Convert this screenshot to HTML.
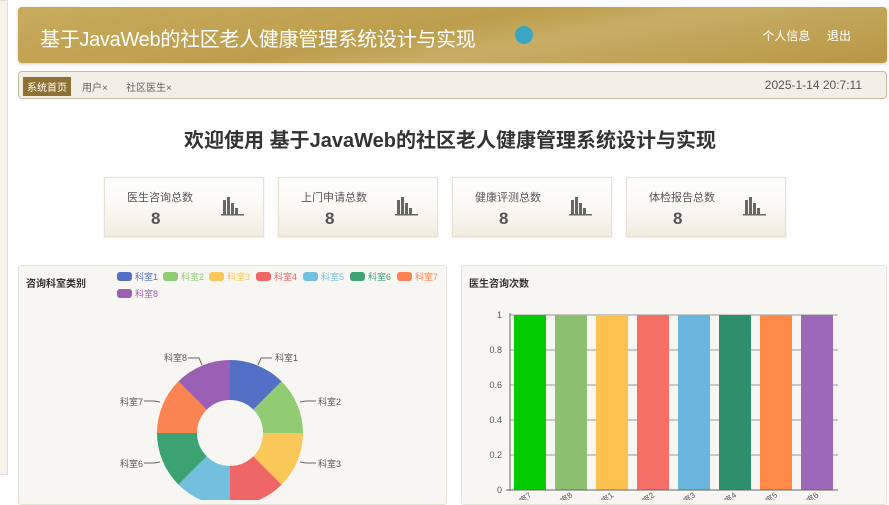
<!DOCTYPE html>
<html><head><meta charset="utf-8"><style>
*{margin:0;padding:0;box-sizing:border-box}
body{width:889px;height:500px;overflow:hidden;background:#fff;font-family:"Liberation Sans","Noto Sans CJK SC",sans-serif;position:relative}
.side{position:absolute;left:0;top:0;width:8px;height:475px;border:1px solid #ddd;border-left:none;background:#f7f3ea}
.hdr{position:absolute;left:18px;top:7px;width:869px;height:56px;border-radius:4px;background:linear-gradient(170deg,#c9ab5e 0%,#bd9e4c 45%,#c8ad65 60%,#b89744 100%);box-shadow:0 1px 3px rgba(0,0,0,.2)}
.hdr .t{position:absolute;left:22px;top:16px;color:#fff;font-size:20px;letter-spacing:-0.3px}
.hdr .r{position:absolute;right:36px;top:20px;color:#fff;font-size:12px;word-spacing:0}
.dot{position:absolute;left:497px;top:19px;width:18px;height:18px;border-radius:50%;background:#3aa6c3}
.tabs{position:absolute;left:18px;top:71px;width:869px;height:28px;border:1px solid #c9bc9c;border-radius:4px;background:#f4efe6}
.tabs span{position:absolute;top:7px;font-size:10px;color:#666}
.tabs .a{left:4px;top:5px;background:#8d7233;color:#fff;padding:2px 4px}
h1{position:absolute;top:124px;left:0;width:900px;text-align:center;font-size:20px;color:#333;font-weight:bold}
.card{position:absolute;top:177px;width:160px;height:60px;border:1px solid #e6e0d2;background:linear-gradient(#fff 0%,#fbf9f4 50%,#f1ece0 100%);box-shadow:0 1px 2px rgba(0,0,0,.08)}
.card .l{position:absolute;left:22px;top:11px;font-size:11px;color:#555}
.card .n{position:absolute;left:46px;top:31px;font-size:17px;color:#555;font-weight:bold}
.card svg{position:absolute;left:116px;top:19px}
.panel{position:absolute;top:265px;height:240px;border:1px solid #e6e2d8;background:#f8f6f2;border-radius:3px}
.pt{position:absolute;left:7px;top:9px;font-size:10px;font-weight:bold;color:#333}
</style></head><body>
<div class="side"></div>
<div class="hdr"><div class="t">基于JavaWeb的社区老人健康管理系统设计与实现</div><div class="dot"></div><div class="r">个人信息&nbsp;&nbsp;&nbsp;&nbsp;&nbsp;退出</div></div>
<div class="tabs"><span class="a">系统首页</span><span style="left:63px">用户×</span><span style="left:107px">社区医生×</span><span style="right:24px;font-size:12px;top:6px;color:#555">2025-1-14 20:7:11</span></div>
<h1>欢迎使用 基于JavaWeb的社区老人健康管理系统设计与实现</h1>
<div class="card" style="left:104px"><div class="l">医生咨询总数</div><div class="n">8</div><svg width="24" height="20"><g fill="#666"><rect x="2" y="3" width="3" height="14"/><rect x="6" y="0" width="3" height="17"/><rect x="10" y="6" width="3" height="11"/><rect x="14" y="11" width="3" height="6"/><rect x="0" y="17" width="23" height="1.5"/></g></svg></div>
<div class="card" style="left:278px"><div class="l">上门申请总数</div><div class="n">8</div><svg width="24" height="20"><g fill="#666"><rect x="2" y="3" width="3" height="14"/><rect x="6" y="0" width="3" height="17"/><rect x="10" y="6" width="3" height="11"/><rect x="14" y="11" width="3" height="6"/><rect x="0" y="17" width="23" height="1.5"/></g></svg></div>
<div class="card" style="left:452px"><div class="l">健康评测总数</div><div class="n">8</div><svg width="24" height="20"><g fill="#666"><rect x="2" y="3" width="3" height="14"/><rect x="6" y="0" width="3" height="17"/><rect x="10" y="6" width="3" height="11"/><rect x="14" y="11" width="3" height="6"/><rect x="0" y="17" width="23" height="1.5"/></g></svg></div>
<div class="card" style="left:626px"><div class="l">体检报告总数</div><div class="n">8</div><svg width="24" height="20"><g fill="#666"><rect x="2" y="3" width="3" height="14"/><rect x="6" y="0" width="3" height="17"/><rect x="10" y="6" width="3" height="11"/><rect x="14" y="11" width="3" height="6"/><rect x="0" y="17" width="23" height="1.5"/></g></svg></div>
<div class="panel" style="left:18px;width:429px"><div class="pt">咨询科室类别</div></div>
<div class="panel" style="left:461px;width:426px"><div class="pt">医生咨询次数</div></div>
<svg style="position:absolute;left:0;top:0" width="889" height="500" font-family="Liberation Sans,Noto Sans CJK SC,sans-serif">
<g font-size="9">
<rect x="117" y="272" width="15" height="9" rx="3" fill="#5470c6"/><text x="135" y="280" fill="#5470c6">科室1</text>
<rect x="163" y="272" width="15" height="9" rx="3" fill="#91cc75"/><text x="181" y="280" fill="#91cc75">科室2</text>
<rect x="209" y="272" width="15" height="9" rx="3" fill="#fac858"/><text x="227" y="280" fill="#fac858">科室3</text>
<rect x="256" y="272" width="15" height="9" rx="3" fill="#ee6666"/><text x="274" y="280" fill="#ee6666">科室4</text>
<rect x="303" y="272" width="15" height="9" rx="3" fill="#73c0de"/><text x="321" y="280" fill="#73c0de">科室5</text>
<rect x="350" y="272" width="15" height="9" rx="3" fill="#3ba272"/><text x="368" y="280" fill="#3ba272">科室6</text>
<rect x="397" y="272" width="15" height="9" rx="3" fill="#fc8452"/><text x="415" y="280" fill="#fc8452">科室7</text>
<rect x="117" y="289" width="15" height="9" rx="3" fill="#9a60b4"/><text x="135" y="297" fill="#9a60b4">科室8</text>
</g>
<path d="M230,360 A73,73 0 0 1 281.6,381.4 L253.3,409.7 A33,33 0 0 0 230,400Z" fill="#5470c6"/>
<path d="M281.6,381.4 A73,73 0 0 1 303,433 L263,433 A33,33 0 0 0 253.3,409.7Z" fill="#91cc75"/>
<path d="M303,433 A73,73 0 0 1 281.6,484.6 L253.3,456.3 A33,33 0 0 0 263,433Z" fill="#fac858"/>
<path d="M281.6,484.6 A73,73 0 0 1 230,506 L230,466 A33,33 0 0 0 253.3,456.3Z" fill="#ee6666"/>
<path d="M230,506 A73,73 0 0 1 178.4,484.6 L206.7,456.3 A33,33 0 0 0 230,466Z" fill="#73c0de"/>
<path d="M178.4,484.6 A73,73 0 0 1 157,433 L197,433 A33,33 0 0 0 206.7,456.3Z" fill="#3ba272"/>
<path d="M157,433 A73,73 0 0 1 178.4,381.4 L206.7,409.7 A33,33 0 0 0 197,433Z" fill="#fc8452"/>
<path d="M178.4,381.4 A73,73 0 0 1 230,360 L230,400 A33,33 0 0 0 206.7,409.7Z" fill="#9a60b4"/>
<g stroke="#666" fill="none" stroke-width="1">
<path d="M258,365 L261,358 L272,358"/><path d="M300,402 L306,401 L316,401"/><path d="M300,462 L306,463 L316,463"/>
<path d="M202,365 L199,358 L188,358"/><path d="M160,402 L154,401 L144,401"/><path d="M160,462 L154,463 L144,463"/>
</g>
<g font-size="9" fill="#555">
<text x="275" y="361">科室1</text><text x="318" y="405">科室2</text><text x="318" y="467">科室3</text>
<text x="164" y="361">科室8</text><text x="120" y="405">科室7</text><text x="120" y="467">科室6</text>
</g>
<g stroke="#999" stroke-width="1">
<line x1="510" y1="315" x2="838" y2="315"/><line x1="510" y1="350" x2="838" y2="350"/><line x1="510" y1="385" x2="838" y2="385"/><line x1="510" y1="420" x2="838" y2="420"/><line x1="510" y1="455" x2="838" y2="455"/>
</g>
<rect x="514" y="315" width="32" height="175" fill="#00cc00"/>
<rect x="555" y="315" width="32" height="175" fill="#8cbf70"/>
<rect x="596" y="315" width="32" height="175" fill="#fdc150"/>
<rect x="637" y="315" width="32" height="175" fill="#f66f66"/>
<rect x="678" y="315" width="32" height="175" fill="#6bb6de"/>
<rect x="719" y="315" width="32" height="175" fill="#2e8f6c"/>
<rect x="760" y="315" width="32" height="175" fill="#ff8a48"/>
<rect x="801" y="315" width="32" height="175" fill="#9c69b8"/>
<g stroke="#666"><line x1="510" y1="313" x2="510" y2="491"/><line x1="506" y1="490" x2="838" y2="490"/></g>
<g font-size="9" fill="#555" text-anchor="end">
<text x="502" y="318">1</text><text x="502" y="353">0.8</text><text x="502" y="388">0.6</text><text x="502" y="423">0.4</text><text x="502" y="458">0.2</text><text x="502" y="493">0</text>
</g>
<g font-size="8" fill="#555" text-anchor="end">
<text transform="translate(532,496) rotate(-40)">科室7</text><text transform="translate(573,496) rotate(-40)">科室8</text><text transform="translate(614,496) rotate(-40)">科室1</text><text transform="translate(655,496) rotate(-40)">科室2</text><text transform="translate(696,496) rotate(-40)">科室3</text><text transform="translate(737,496) rotate(-40)">科室4</text><text transform="translate(778,496) rotate(-40)">科室5</text><text transform="translate(819,496) rotate(-40)">科室6</text>
</g>
</svg>
</body></html>
